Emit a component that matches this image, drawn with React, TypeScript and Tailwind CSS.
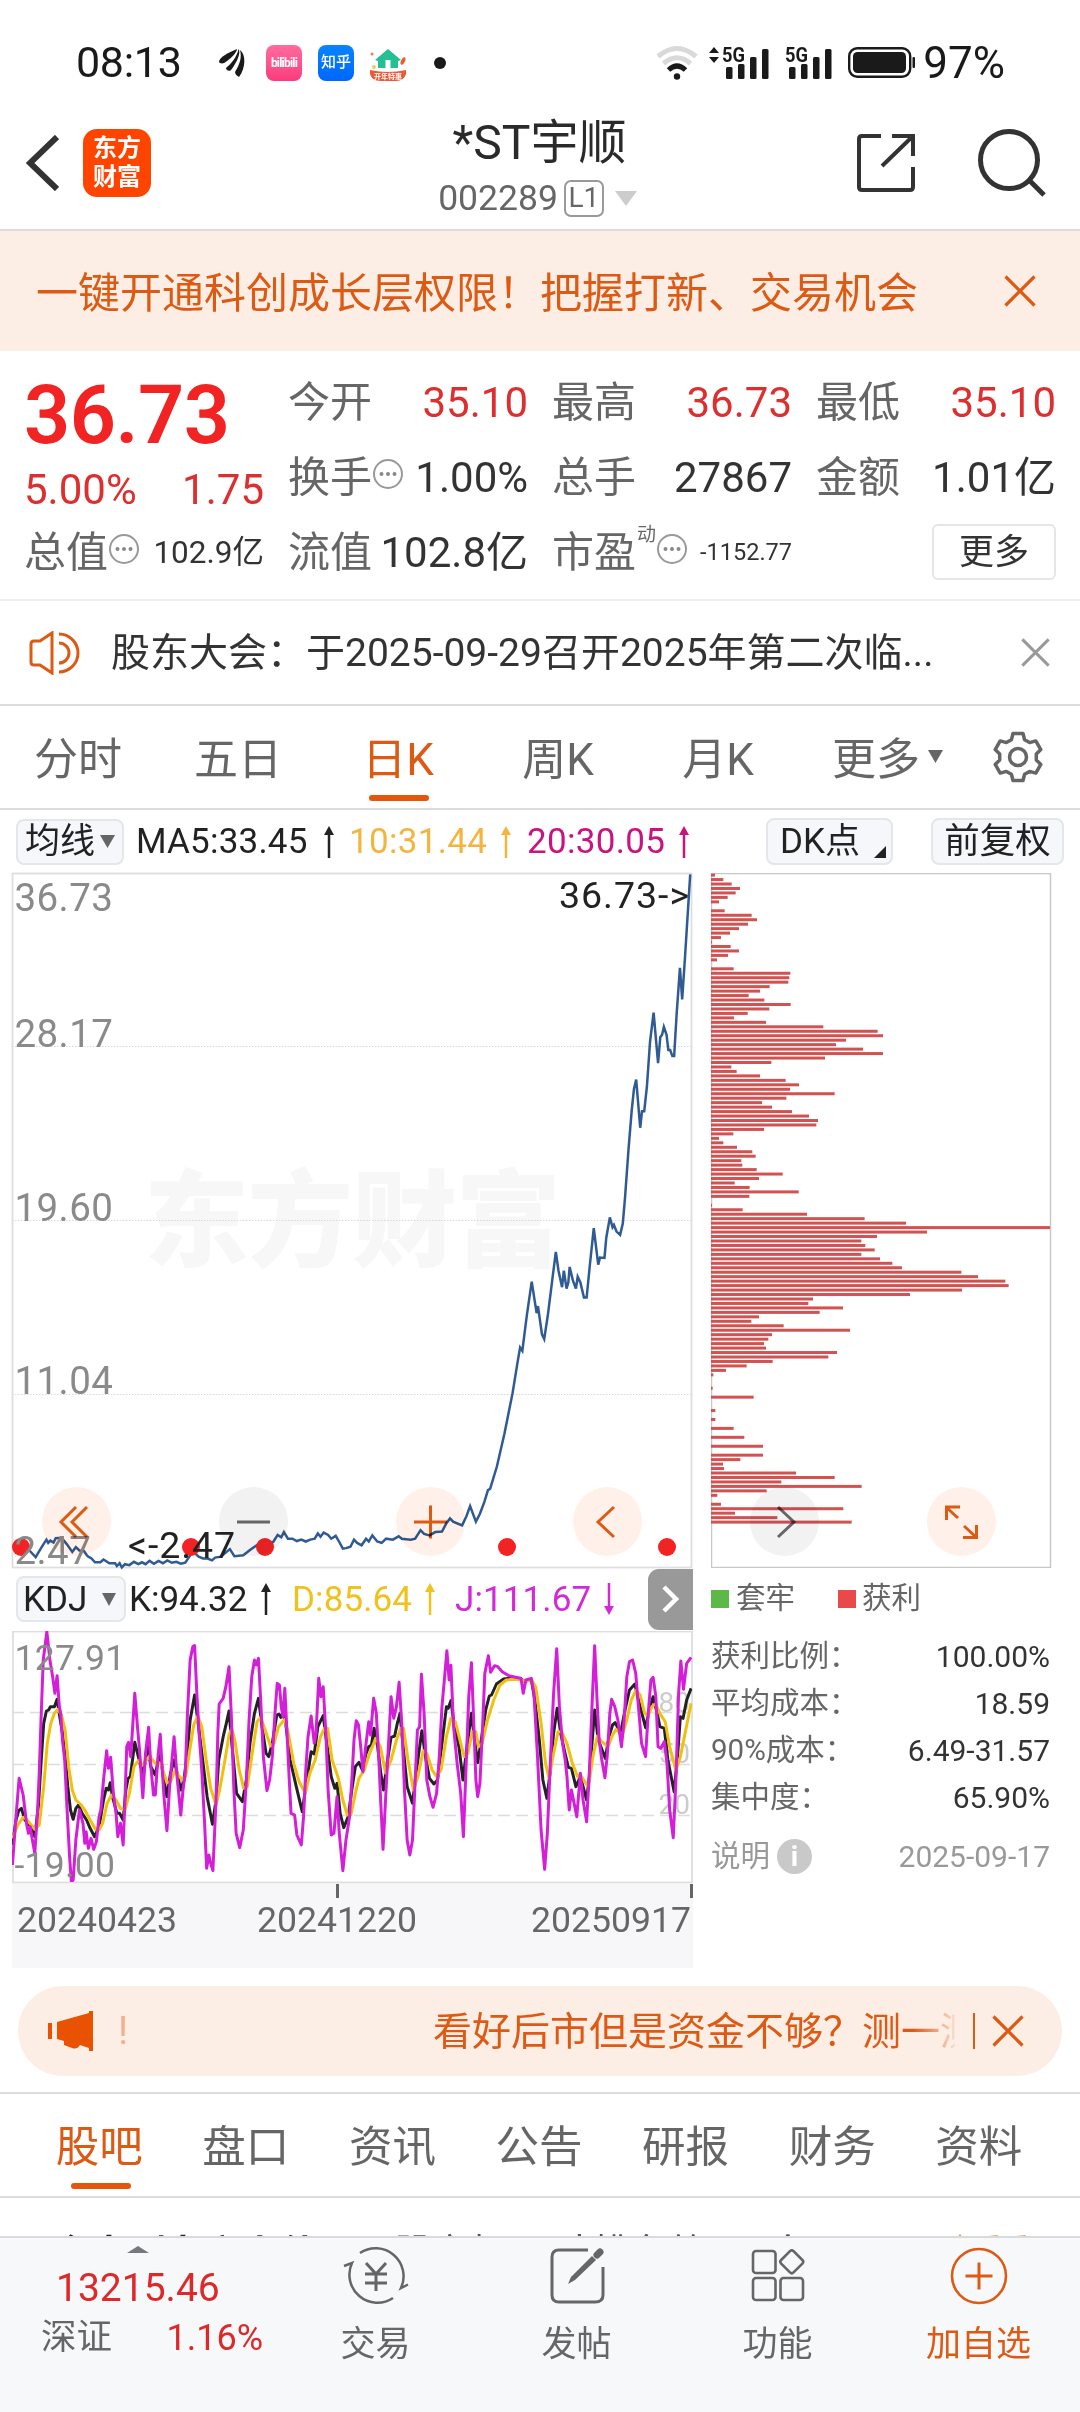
import { useState } from "react";

const stats = [
  { label: "今开", value: "35.10", red: true },
  { label: "最高", value: "36.73", red: true },
  { label: "最低", value: "35.10", red: true },
  { label: "换手", value: "1.00%", tip: true },
  { label: "总手", value: "27867" },
  { label: "金额", value: "1.01亿" },
];

const periods = ["分时", "五日", "日K", "周K", "月K"];
const sections = ["股吧", "盘口", "资讯", "公告", "研报", "财务", "资料"];

const chips = [
  { label: "获利比例：", value: "100.00%" },
  { label: "平均成本：", value: "18.59" },
  { label: "90%成本：", value: "6.49-31.57" },
  { label: "集中度：", value: "65.90%" },
];

// one entry per price level, top of the range first, 1017 = full width
const chipBars = [
  12, 37, 62, 87, 74, 50, 24, 0, 41, 122, 138, 111, 84, 57, 30, 3, 59, 84, 51, 18, 0, 68, 238, 235, 232, 176, 147, 113,
  160, 239, 175, 110, 69, 165, 337, 500, 516, 405, 375, 456, 516, 342, 181, 61, 77, 147, 224, 264, 237, 371, 226, 153,
  183, 243, 294, 321, 316, 159, 67, 24, 37, 78, 124, 134, 91, 94, 137, 215, 144, 71, 116, 263, 115, 0, 3, 95, 288, 461,
  585, 1017, 648, 498, 451, 463, 491, 451, 507, 544, 573, 751, 801, 883, 893, 753, 597, 306, 292, 396, 326, 144, 121,
  218, 417, 183, 172, 159, 165, 378, 352, 185, 107, 45, 7, 0, 0, 5, 0, 128, 0, 0, 13, 0, 13, 0, 68, 0, 100, 0, 156, 0,
  156, 88, 36, 39, 255, 371, 211, 452, 167, 19, 0, 30, 397, 72, 199, 422,
];

const priceLine =
  "65,1462 80,1477 92,1458 104,1440 108,1447 113,1442 120,1446 125,1437 138,1436 150,1450 162,1466 170,1456 178,1463 188,1464 196,1475 205,1480 213,1488 225,1488 232,1482 245,1490 258,1490 262,1496 268,1490 273,1499 280,1492 290,1494 300,1487 310,1492 318,1488 326,1492 335,1485 345,1491 355,1485 365,1490 375,1484 385,1489 395,1487 405,1491 415,1489 425,1475 432,1465 445,1476 455,1480 465,1480 475,1484 482,1478 495,1476 505,1468 515,1460 525,1475 545,1473 560,1462 575,1452 585,1448 600,1450 612,1445 622,1430 630,1435 636,1424 645,1438 655,1438 665,1443 675,1440 685,1444 695,1440 705,1438 712,1427 718,1434 725,1425 735,1430 742,1438 752,1432 760,1445 768,1459 775,1458 785,1455 793,1440 800,1447 810,1452 820,1438 826,1444 834,1431 845,1444 855,1447 865,1438 880,1440 893,1433 900,1438 920,1440 930,1438 942,1420 950,1428 962,1431 975,1424 990,1423 1000,1405 1008,1395 1015,1402 1035,1410 1045,1390 1053,1369 1066,1402 1075,1385 1085,1360 1093,1335 1098,1332 1113,1285 1130,1215 1148,1130 1160,1060 1165,1033 1170,1040 1180,965 1191,893 1202,960 1205,945 1214,1005 1219,1015 1227,965 1237,890 1245,830 1251,870 1259,905 1263,870 1269,908 1273,895 1276,862 1283,890 1290,908 1294,883 1300,895 1308,927 1314,927 1321,860 1330,780 1340,857 1344,842 1354,843 1358,800 1366,757 1372,778 1375,773 1381,787 1389,794 1395,770 1400,715 1408,610 1415,530 1420,485 1425,465 1434,567 1438,532 1443,532 1449,480 1456,385 1464,323 1474,430 1479,375 1483,370 1487,353 1493,370 1497,402 1501,402 1506,415 1510,415 1516,320 1523,228 1528,295 1534,210 1546,30";

const jLine =
  "28,1155 36,1010 43,895 52,945 60,1035 64,1060 68,1040 72,1075 78,1120 84,1000 88,880 92,720 97,540 105,455 112,540 118,590 123,640 128,587 133,680 136,700 140,780 145,840 150,980 156,1130 160,1206 164,1200 170,1080 178,990 186,1030 190,1090 193,1055 198,1105 204,1075 210,1108 216,1085 222,1010 226,990 232,900 239,812 243,865 248,832 254,940 260,1000 264,1070 270,1030 276,1095 280,960 284,800 288,787 293,830 302,640 308,740 313,815 320,953 326,820 333,742 338,860 344,945 348,945 354,830 359,763 364,880 368,960 374,1052 380,920 390,770 396,880 405,1005 410,930 415,880 420,700 426,540 432,500 436,497 441,640 446,760 452,870 458,1020 463,1165 468,1125 472,1150 477,1172 484,960 488,760 491,672 500,655 506,620 513,560 518,700 524,930 529,1060 537,1103 545,1050 552,900 558,720 564,590 570,540 574,555 579,535 584,660 590,830 598,932 604,900 610,830 616,700 621,610 626,615 630,680 634,710 638,625 643,760 648,900 652,1000 660,1005 665,1065 675,1095 680,1010 685,870 690,770 697,708 704,790 708,760 714,595 719,650 724,620 730,760 735,930 742,1065 748,1060 755,950 760,1060 768,1172 775,1080 783,1010 789,880 793,780 798,722 803,735 808,800 813,875 820,790 826,725 830,765 837,655 843,700 849,850 853,970 858,1108 864,950 870,800 876,650 882,715 888,680 894,607 900,730 906,930 912,1080 918,1125 924,1080 930,900 935,750 940,740 944,583 950,700 956,900 963,950 970,982 978,940 984,830 990,680 996,590 1001,512 1006,600 1010,556 1016,740 1024,850 1032,940 1038,1070 1044,860 1050,650 1056,548 1061,720 1066,900 1070,950 1075,910 1081,740 1086,580 1094,527 1099,577 1104,565 1108,557 1115,560 1125,575 1140,587 1160,593 1167,595 1172,640 1178,600 1190,595 1196,640 1204,830 1212,1050 1220,1168 1226,1060 1233,840 1240,640 1247,506 1253,680 1260,790 1266,840 1270,890 1275,990 1280,930 1286,970 1292,1010 1300,880 1306,960 1314,1025 1320,880 1326,680 1332,497 1337,650 1342,780 1348,840 1355,893 1360,830 1366,700 1370,658 1377,680 1384,720 1392,800 1398,720 1404,590 1410,545 1417,540 1424,580 1430,680 1437,790 1446,830 1452,700 1458,600 1463,592 1469,650 1474,800 1480,805 1488,785 1494,850 1500,990 1508,1073 1514,900 1520,640 1525,543 1531,628 1538,550 1548,532";

const kLine =
  "28,1095 36,1020 42,992 48,985 56,1020 66,1035 73,1045 78,1070 86,980 92,850 98,730 104,693 109,690 113,680 122,680 128,658 134,710 140,760 146,830 152,920 158,990 164,1018 170,985 176,975 184,1000 194,1020 202,1045 212,1070 222,1040 232,960 238,925 243,930 247,908 252,950 262,1000 268,1000 276,1020 282,930 287,895 292,890 302,787 310,830 320,885 326,840 331,800 338,860 348,885 358,815 366,890 374,950 382,880 390,840 397,880 405,930 412,900 418,840 426,720 436,645 444,730 454,840 464,950 476,1033 484,960 490,840 500,770 507,730 513,693 520,800 530,940 543,965 552,900 560,790 570,700 579,655 587,740 596,820 602,830 610,790 620,705 625,702 629,712 634,700 640,730 650,840 662,910 677,995 685,920 697,815 704,822 712,740 724,707 732,790 742,890 750,925 755,910 762,1000 770,1043 780,1010 788,930 796,860 804,847 812,870 820,820 826,800 832,795 838,745 846,800 853,880 859,930 867,850 876,772 884,768 890,730 896,700 903,800 912,920 924,970 932,880 938,820 945,752 953,830 962,895 972,912 980,900 990,790 1000,680 1004,685 1010,662 1018,740 1028,800 1037,900 1046,800 1056,700 1063,780 1070,848 1078,780 1088,690 1096,648 1101,645 1112,612 1128,597 1150,594 1168,598 1176,605 1190,598 1198,660 1208,780 1216,900 1225,955 1232,880 1240,760 1248,685 1256,760 1264,810 1273,862 1280,865 1290,920 1300,890 1314,960 1320,890 1326,790 1332,690 1340,780 1356,835 1364,770 1372,735 1378,728 1390,760 1400,690 1410,630 1422,612 1430,660 1446,743 1456,680 1463,650 1472,700 1478,740 1488,745 1496,840 1510,935 1518,820 1524,710 1530,715 1538,660 1548,625";

const dLine =
  "28,1075 40,1035 52,1012 60,1018 78,1048 88,1035 98,920 106,790 114,730 122,700 130,688 138,705 146,750 154,860 162,930 170,960 180,972 190,990 202,1020 214,1048 222,1050 230,1030 240,970 250,945 260,960 270,985 280,990 290,940 300,860 310,842 320,855 335,828 348,850 360,850 374,908 382,905 392,872 408,900 416,890 424,820 434,735 443,708 452,740 462,840 472,925 484,975 492,930 504,840 513,765 519,745 526,780 536,870 546,925 554,920 566,810 576,725 584,712 594,750 606,798 614,790 624,740 638,718 646,760 658,850 670,905 684,940 694,880 706,840 718,770 728,742 734,745 744,840 758,895 768,960 778,1005 786,1005 796,940 804,895 816,870 828,820 842,775 852,800 864,880 876,840 888,780 898,745 904,745 914,840 926,930 936,890 948,812 956,820 968,870 978,890 988,870 1000,770 1010,715 1020,725 1032,790 1040,830 1048,820 1058,755 1066,755 1072,800 1080,790 1092,720 1106,660 1120,615 1134,600 1150,598 1168,600 1178,605 1190,598 1200,620 1212,730 1222,850 1230,895 1240,820 1250,755 1258,755 1270,790 1282,850 1294,890 1300,885 1310,905 1318,922 1328,830 1338,768 1348,785 1362,800 1372,765 1380,748 1394,765 1404,720 1414,660 1424,632 1434,645 1444,700 1452,708 1460,680 1468,672 1480,705 1490,725 1500,800 1514,872 1524,830 1536,750 1548,670";

// six-tooth gear outline around 0,0
const gear = [0, 1, 2, 3, 4, 5]
  .flatMap((i) =>
    [[-21, 18.5], [-12, 24], [12, 24], [21, 18.5]].map(([a, r]) => {
      const t = ((i * 60 - 90 + a) * Math.PI) / 180;
      return `${(r * Math.cos(t)).toFixed(1)},${(r * Math.sin(t)).toFixed(1)}`;
    })
  )
  .join(" ");

function Arrow({ down }: { down?: boolean }) {
  return (
    <svg width="12" height="32" viewBox="0 0 12 32" className={down ? "rotate-180" : ""}>
      <path d="M6 4V32" stroke="currentColor" strokeWidth="2.5" />
      <path d="M6 0L11 9H1Z" fill="currentColor" />
    </svg>
  );
}

function Caret({ w = 15, h = 13, className = "" }: { w?: number; h?: number; className?: string }) {
  return (
    <svg width={w} height={h} viewBox="0 0 10 10" preserveAspectRatio="none" className={className}>
      <path d="M0 0H10L5 10Z" fill="currentColor" />
    </svg>
  );
}

function Tip() {
  return (
    <svg width="32" height="32" viewBox="0 0 32 32" className="-mt-2 shrink-0">
      <circle cx="16" cy="16" r="14" fill="none" stroke="#999" strokeWidth="2" />
      <g fill="#888">
        <circle cx="9.5" cy="16" r="2" />
        <circle cx="16" cy="16" r="2" />
        <circle cx="22.5" cy="16" r="2" />
      </g>
    </svg>
  );
}

function Close({ size, className }: { size: number; className?: string }) {
  return (
    <svg width={size} height={size} viewBox="0 0 32 32" className={className}>
      <path d="M1.5 1.5L30.5 30.5M30.5 1.5L1.5 30.5" stroke="currentColor" strokeWidth="3.2" fill="none" />
    </svg>
  );
}

function Signal() {
  return (
    <svg width="46" height="34" viewBox="0 0 46 34" className="overflow-visible text-[#1a1a1a]">
      <text x="-1" y="16" fontSize="20" fontWeight="700" fill="currentColor" textLength="23" lengthAdjust="spacingAndGlyphs">5G</text>
      <g fill="currentColor">
        <rect x="3" y="21" width="6.5" height="12" rx="1.5" />
        <rect x="15" y="18" width="6.5" height="15" rx="1.5" />
        <rect x="27" y="11" width="6.5" height="22" rx="1.5" />
        <rect x="39" y="3" width="6.5" height="30" rx="1.5" />
      </g>
    </svg>
  );
}

function StatusBar() {
  return (
    <div className="flex h-[125px] items-center pl-[76px] pr-[75px] text-[#1a1a1a]">
      <span className="w-[143px] text-[43px] leading-none tracking-[-0.3px]">08:13</span>
      <svg width="27" height="30" viewBox="0 0 27 30" fill="currentColor">
        <path d="M0 14C0 9 9 5 18 1C18 5 9 13 5 15C3 16 0 15 0 14Z" />
        <path d="M7 20C12 16 18 9 19.500 1C22 4 19 13 12 22C10 24 7 22 7 20Z" />
        <path d="M16 24C21 16 23 9 21 2C27 6 27 20 20 29C18 28 16 26 16 24Z" />
      </svg>
      <div className="ml-5 flex h-9 w-9 items-center justify-center rounded-lg bg-linear-to-b from-[#ff6a9d] to-[#fb3a7c] text-[12px] font-bold tracking-[-0.8px] text-white">
        bilibili
      </div>
      <div className="ml-4 flex h-9 w-9 items-center justify-center rounded-lg bg-linear-to-b from-[#0a84ff] to-[#0066ff] text-[15px] font-medium text-white">
        知乎
      </div>
      <svg width="36" height="36" viewBox="0 0 36 36" className="ml-4">
        <path d="M18 4L5 15L8 16V23H28V16L31 15Z" fill="#25bf95" />
        <rect x="15.500" y="15" width="5" height="8" fill="#fff" />
        <path d="M0 25Q18 29 36 25V29Q34 36 26 36H10Q2 36 0 29Z" fill="#ea5a34" />
        <ellipse cx="33" cy="16" rx="2" ry="4" fill="#e8602c" transform="rotate(25 33 16)" />
        <circle cx="2" cy="9" r="1.500" fill="#f07a4a" />
        <circle cx="4" cy="22" r="2" fill="#f6c667" />
        <text x="18" y="34" fontSize="7" fontWeight="700" fill="#fff" textAnchor="middle">开年特惠</text>
      </svg>
      <span className="ml-7 h-3 w-3 rounded-full bg-[#1a1a1a]" />

      <svg width="42" height="36" viewBox="0 0 42 36" fill="none" strokeWidth="5" className="ml-auto">
        <path d="M2 11.500Q21 -4.500 40 11.500" stroke="#d9d9d9" />
        <path d="M7.500 18.500Q21 7 34.500 18.500" stroke="#d9d9d9" />
        <path d="M12.500 25Q21 17 29.500 25" stroke="#1a1a1a" />
        <circle cx="21" cy="31.500" r="3.200" fill="#1a1a1a" />
      </svg>
      <svg width="12" height="16" viewBox="0 0 12 16" className="-mt-4 ml-[10px]" fill="currentColor">
        <path d="M6 0L11 6H1ZM6 16L11 10H1Z" />
      </svg>
      <div className="ml-[3px]"><Signal /></div>
      <div className="ml-[17px]"><Signal /></div>
      <svg width="68" height="31" viewBox="0 0 68 31" className="ml-4">
        <rect x="1.200" y="1.200" width="61" height="28.600" rx="8" fill="none" stroke="#1a1a1a" strokeWidth="2.400" />
        <rect x="5" y="5" width="53" height="21" rx="4.500" fill="#1a1a1a" />
        <rect x="64.500" y="10" width="2.500" height="11" rx="1" fill="#1a1a1a" />
      </svg>
      <span className="ml-[7px] text-[44px] leading-none">97%</span>
    </div>
  );
}

function Header() {
  return (
    <header className="flex h-[106px] items-start justify-between border-b-2 border-[#dcdcdc] pl-[26px] pr-[34px] text-[#333]">
      <div className="flex w-[220px] items-center gap-6 pt-1">
        <svg width="33" height="56" viewBox="0 0 33 56" fill="none" stroke="currentColor" strokeWidth="6">
          <path d="M31 2L4 28L31 54" />
        </svg>
        <div className="flex h-[68px] w-[68px] flex-col items-center justify-center rounded-[14px] bg-[#ff4400] text-2xl leading-[29px] font-bold text-white">
          <span>东方</span>
          <span>财富</span>
        </div>
      </div>
      <div className="flex flex-col items-center">
        <h1 className="mt-[-6px] ml-[7px] text-[48px] leading-[48px] text-[#2a2a2a]">*ST宇顺</h1>
        <div className="mt-[11px] ml-[3px] flex items-center text-[35.500px] leading-[40px] text-[#666]">
          002289
          <span className="ml-[6px] flex h-[37px] w-10 items-center justify-center rounded-[7px] border-2 border-[#999] text-[28px] leading-none">L1</span>
          <Caret w={22} h={15} className="ml-[11px] text-[#ccc]" />
        </div>
      </div>
      <div className="flex w-[220px] justify-end gap-[63px] pt-1">
        <svg width="58" height="58" viewBox="0 0 58 58" fill="none" stroke="currentColor" strokeWidth="4" className="mt-[5px]">
          <path d="M24 2H5Q2 2 2 5V53Q2 56 5 56H53Q56 56 56 53V33M35 2H56V22M55 3L25 32" />
        </svg>
        <svg width="68" height="68" viewBox="0 0 68 68" fill="none" stroke="currentColor" strokeWidth="5">
          <circle cx="31" cy="31" r="28.500" />
          <path d="M52 52L66 66" />
        </svg>
      </div>
    </header>
  );
}

function Quote() {
  return (
    <section className="flex h-[250px] gap-[24px] border-b-2 border-[#efefef] px-[24px] pt-[14px] text-[42px] leading-[75px] text-[#333]">
      <div className="w-[240px] shrink-0">
        <div className="h-[88px] pt-[7px] text-[81px] leading-[88px] font-semibold tracking-[-0.5px] text-[#f12323]">36.73</div>
        <div className="flex h-[62px] justify-between pt-[6px] leading-[62px] text-[#dc3030]">
          <span className="text-[42px]">5.00%</span>
          <span className="text-[42px]">1.75</span>
        </div>
        <div className="flex h-[75px] items-center whitespace-nowrap">
          <span className="text-[#666]">总值</span>
          <Tip />
          <span className="ml-auto text-[31.500px]">102.9亿</span>
        </div>
      </div>
      <div className="grid flex-1 grid-cols-3 gap-x-[24px] whitespace-nowrap [grid-auto-rows:75px]">
        {stats.map((s) => (
          <div key={s.label} className="flex items-center">
            <span className="text-[#666]">{s.label}</span>
            {s.tip && <Tip />}
            <span className={"ml-auto " + (s.red ? "text-[#dc3030]" : "")}>{s.value}</span>
          </div>
        ))}
        <div className="flex items-center justify-between">
          <span className="text-[#666]">流值</span>
          <span>102.8亿</span>
        </div>
        <div className="flex items-center">
          <span className="text-[#666]">市盈</span>
          <span className="-mt-9 ml-px text-[19px] leading-none text-[#666]">动</span>
          <Tip />
          <span className="ml-auto text-[23.500px]">-1152.77</span>
        </div>
        <button className="mt-[9px] ml-auto flex h-14 w-[124px] items-center justify-center rounded-md border-2 border-[#e6e6e6] text-[35px] leading-none">更多</button>
      </div>
    </section>
  );
}

function PriceChart() {
  return (
    <svg width="681" height="694" viewBox="12 873 681 694" className="block overflow-visible">
      <g fill="#f7f7f7" fontWeight="900" fontSize="105">
        <text x="144" y="1258" textLength="417">东方财富</text>
      </g>
      <rect x="12.500" y="873.500" width="679" height="694" fill="none" stroke="#dedede" strokeWidth="1.800" />
      <g stroke="#d8d8d8" strokeDasharray="1.500 1.500">
        <path d="M12 1046.500H692M12 1220.500H692M12 1394.500H692" />
      </g>
      <svg x="12" y="873" width="680" height="694" viewBox="27 27 1523 1471" preserveAspectRatio="none" overflow="visible">
        <polyline points={priceLine} fill="none" stroke="#2f5a93" strokeWidth="2.500" vectorEffect="non-scaling-stroke" />
      </svg>
      <g fill="#f12323">
        {[21, 191, 265, 507, 667].map((x) => (
          <circle key={x} cx={x} cy="1547" r="9" />
        ))}
      </g>
      <g fill="#8a8a8a" fontSize="38.500" letterSpacing="0.4">
        <text x="14.500" y="911">36.73</text>
        <text x="14.500" y="1047">28.17</text>
        <text x="14.500" y="1221">19.60</text>
        <text x="14.500" y="1394">11.04</text>
        <text x="14.500" y="1564">2.47</text>
      </g>
      <g fill="#222" fontSize="37.500">
        <text x="559" y="908" textLength="130">36.73-&gt;</text>
        <text x="128" y="1558" textLength="107">&lt;-2.47</text>
      </g>
    </svg>
  );
}

function KdjChart() {
  return (
    <svg width="681" height="253" viewBox="12 1631 681 253" className="block">
      <rect x="13" y="1631.500" width="679" height="251" fill="none" stroke="#dedede" strokeWidth="1.800" />
      <g stroke="#dcdcdc" strokeWidth="1.500" strokeDasharray="12 6">
        <path d="M12 1712.500H692M12 1764.500H692M12 1815.500H692" />
      </g>
      <g fill="#ccc" fontSize="28" textAnchor="end">
        <text x="690" y="1712">80</text>
        <text x="690" y="1763">50</text>
        <text x="690" y="1814">20</text>
      </g>
      <svg x="12" y="1631" width="680" height="251" viewBox="27 453 1523 753" preserveAspectRatio="none">
        <g fill="none" strokeWidth="3" strokeLinejoin="round">
          <polyline points={kLine} stroke="#222" vectorEffect="non-scaling-stroke" />
          <polyline points={dLine} stroke="#f0c010" vectorEffect="non-scaling-stroke" />
          <polyline points={jLine} stroke="#d41fd8" vectorEffect="non-scaling-stroke" />
        </g>
      </svg>
      <g fill="#8a8a8a" fontSize="35.500" letterSpacing="0.3">
        <text x="14.500" y="1670">127.91</text>
        <text x="14.500" y="1877">-19.00</text>
      </g>
    </svg>
  );
}

function ChipChart() {
  const step = 647 / (chipBars.length - 1);
  return (
    <svg width="341" height="695" viewBox="0 0 341 695" className="block">
      <rect x="0.500" y="0.500" width="339" height="694" fill="none" stroke="#c8c8c8" strokeWidth="1.500" />
      <g fill="#d25252">
        {chipBars.map((w, i) => (
          <rect key={i} x="0" y={0.6 + i * step} width={w / 3} height="3" />
        ))}
      </g>
    </svg>
  );
}

const controls = [
  { key: "first", d: "M34 20L19 35L34 50M45 20L30 35L45 50" },
  { key: "minus", d: "M18 35H51", gray: true },
  { key: "plus", d: "M18 35H51M34.500 18.500V51.500" },
  { key: "prev", d: "M41 20L25 35L41 50" },
  { key: "next", d: "M28 20L44 35L28 50", gray: true },
  { key: "expand", d: "M19.500 33V20H33M20 21L31 31M49.500 38V50.500H36M49 50L37 39" },
];

function Charts() {
  return (
    <section className="relative flex pl-3">
      <div className="w-[681px]">
        <PriceChart />
        <div className="flex h-16 items-center pl-1 text-[35px] leading-none text-[#222]">
          <div className="flex h-[46px] w-[110px] items-center justify-between rounded-lg border-2 border-[#e3e6ea] bg-[#f6f7fa] pr-2 pl-[5px]">
            KDJ
            <Caret w={14} className="text-[#666]" />
          </div>
          <span className="ml-[3px] w-[131px]">K:94.32</span>
          <Arrow />
          <span className="ml-[20px] w-[132px] tracking-[0.1px] text-[#efc21c]">D:85.64</span>
          <span className="text-[#efc21c]"><Arrow /></span>
          <span className="ml-[19px] w-[148px] tracking-[0.1px] text-[#d22ad6]">J:111.67</span>
          <span className="text-[#d22ad6]"><Arrow down /></span>
          <span className="ml-auto flex h-[61px] w-[45px] items-center justify-center rounded-l-[11px] bg-[#999]">
            <svg width="18" height="28" viewBox="0 0 18 28" fill="none" stroke="#fff" strokeWidth="4.500">
              <path d="M2 2L14 14L2 26" />
            </svg>
          </span>
        </div>
        <KdjChart />
        <div className="relative flex h-[84px] bg-[#f7f7fa] pt-[16px] pr-[2px] pl-[5px] text-[35.600px] leading-[40px] text-[#666]">
          <span className="w-[240px]">20240423</span>
          <span>20241220</span>
          <span className="ml-auto">20250917</span>
          <i className="absolute top-0 left-[324px] h-[14px] w-[3px] bg-[#666]" />
          <i className="absolute top-0 right-0 h-[14px] w-[3px] bg-[#666]" />
        </div>
      </div>

      <div className="ml-[18px] w-[341px] text-[30px] leading-none text-[#333]">
        <ChipChart />
        <div className="flex h-[60px] items-center pt-[2px] text-[29.500px] text-[#666]">
          <i className="mr-[7px] h-[18px] w-[18px] bg-[#5cb947]" />
          套牢
          <i className="mr-[6px] ml-[43px] h-[18px] w-[18px] bg-[#e84a4a]" />
          获利
        </div>
        <div className="mt-[5px]">
          {chips.map((c) => (
            <div key={c.label} className="flex h-[47px] items-center justify-between pr-[2px]">
              <span className="text-[29.500px] text-[#666]">{c.label}</span>
              <span>{c.value}</span>
            </div>
          ))}
        </div>
        <div className="mt-3 flex h-[47px] items-center pr-[2px] text-[#999]">
          <span className="text-[29.500px]">说明</span>
          <span className="ml-[7px] flex h-[35px] w-[35px] items-center justify-center rounded-full bg-[#c9c9c9] text-[28px] font-bold text-white">i</span>
          <span className="ml-auto">2025-09-17</span>
        </div>
      </div>

      {/* chart controls float over both charts */}
      <div className="absolute top-[614px] left-[42px] flex gap-[108px]">
        {controls.map((c) => (
          <button
            key={c.key}
            className={"h-[69px] w-[69px] rounded-full mix-blend-multiply " + (c.gray ? "bg-[#f2f2f2] text-[#666]" : "bg-[#fff1e9] text-[#dd5a14]")}
          >
            <svg width="69" height="69" viewBox="0 0 69 69" fill="none" stroke="currentColor" strokeWidth="3">
              <path d={c.d} />
            </svg>
          </button>
        ))}
      </div>
    </section>
  );
}

function BottomBar() {
  return (
    <footer className="flex h-[176px] shrink-0 border-t-2 border-[#d9dade] bg-[#f7f8fa] text-[35px] leading-none text-[#666]">
      <div className="w-[275px] pt-2">
        <svg width="22" height="7" viewBox="0 0 22 7" className="ml-[127px]"><path d="M11 0L22 7H0Z" fill="#77777c" /></svg>
        <div className="mt-4 pl-[56px] text-[39px] text-[#dc2a2a]">13215.46</div>
        <div className="mt-3 flex items-center justify-between pr-[12px] pl-[41px] text-[35.500px]">
          深证
          <span className="text-[36px] text-[#dc2a2a]">1.16%</span>
        </div>
      </div>
      <div className="flex w-[201px] flex-col items-center pt-[8px]">
        <svg width="66" height="60" viewBox="0 0 66 60" fill="none" stroke="currentColor" strokeWidth="2.500">
          <path d="M17 7A28 28 0 0 1 58 42L65 38.500" />
          <path d="M50 52A28 28 0 0 1 9 17L1 20" />
          <path d="M23 17L33 28L43 17M22 28H44M22 37H44M33 28V45" strokeWidth="3" />
        </svg>
        <span className="mt-[21px]">交易</span>
      </div>
      <div className="flex w-[201px] flex-col items-center pt-[8px]">
        <svg width="56" height="60" viewBox="0 0 56 60" fill="none" stroke="currentColor" strokeWidth="3">
          <path d="M39 4H10Q3 4 3 11V49Q3 56 10 56H46Q54 56 54 49V21" />
          <path d="M19 38L22 31L43 10L47 14L26 34Z" fill="currentColor" stroke="none" />
          <path d="M48 9L51 6" strokeWidth="7" strokeLinecap="round" />
        </svg>
        <span className="mt-[21px]">发帖</span>
      </div>
      <div className="flex w-[201px] flex-col items-center pt-[8px]">
        <svg width="54" height="60" viewBox="0 0 54 60" fill="none" stroke="currentColor" strokeWidth="2.600">
          <rect x="2" y="5" width="22.500" height="22" rx="3" />
          <rect x="2" y="32" width="22.500" height="22" rx="3" />
          <rect x="29.500" y="32" width="22.500" height="22" rx="3" />
          <rect x="32" y="7" width="17.500" height="17.500" rx="2.500" transform="rotate(45 40.700 15.800)" />
        </svg>
        <span className="mt-[21px]">功能</span>
      </div>
      <div className="flex w-[201px] flex-col items-center pt-[8px] text-[#dd5a14]">
        <svg width="60" height="60" viewBox="0 0 60 60" fill="none" stroke="currentColor" strokeWidth="2.600">
          <circle cx="30" cy="30" r="27" />
          <path d="M16.500 30H43.500M30 16.500V43.500" strokeWidth="3" />
        </svg>
        <span className="mt-[21px]">加自选</span>
      </div>
    </footer>
  );
}

export default function App() {
  const [period, setPeriod] = useState("日K");
  const [section, setSection] = useState("股吧");

  return (
    <div className="flex h-[2412px] w-[1080px] flex-col overflow-hidden bg-white [font-family:Roboto,'Noto_Sans_CJK_SC',sans-serif]">
      <StatusBar />
      <Header />

      <div className="flex h-[120px] items-center justify-between bg-[#fceee5] pr-[44px] pl-[36px] text-[42px] leading-none text-[#dd5a14]">
        <span className="pt-[5px] whitespace-nowrap">一键开通科创成长层权限！把握打新、交易机会</span>
        <Close size={32} />
      </div>

      <Quote />

      {/* company notice */}
      <div className="flex h-[105px] items-center border-b-2 border-[#dcdcdc] pr-[30px] pl-[29px] text-[39px] leading-none text-[#333]">
        <svg width="52" height="44" viewBox="0 0 52 44" fill="none" stroke="#dd5a14" strokeWidth="3">
          <path d="M23 2V42L11 34H5Q2 34 2 31V13Q2 10 5 10H11Z" />
          <path d="M30 3A18 18 0 0 1 30 41M30 12A10 10 0 0 1 30 32" />
        </svg>
        <span className="ml-[30px] pt-px whitespace-nowrap">股东大会：于2025-09-29召开2025年第二次临...</span>
        <Close size={29} className="ml-auto text-[#999]" />
      </div>

      {/* k-line period */}
      <nav className="flex h-[104px] border-b-2 border-[#dcdcdc] text-[44px] leading-none text-[#666]">
        {periods.map((p) => (
          <button key={p} onClick={() => setPeriod(p)} className={"relative flex w-[160px] items-center justify-center pt-[6px] pr-[4px] " + (p === period ? "text-[#dd5a14]" : "")}>
            {p}
            {p === period && <i className="absolute bottom-[7px] left-[49px] h-[6px] w-[60px] rounded-full bg-[#e4560a]" />}
          </button>
        ))}
        <button className="ml-[32px] flex items-center gap-[8px] pt-[6px]">
          更多
          <Caret className="-mt-2" />
        </button>
        <svg width="52" height="52" viewBox="-26 -26 52 52" fill="none" stroke="currentColor" strokeWidth="3.500" strokeLinejoin="round" className="my-auto ml-auto mr-[36px]">
          <polygon points={gear} />
          <circle r="8.500" />
        </svg>
      </nav>

      {/* moving averages */}
      <div className="flex h-[63px] items-center pr-4 pl-4 text-[35px] leading-none whitespace-nowrap text-[#222]">
        <div className="flex h-[46px] w-[108px] items-center justify-between rounded-lg border-2 border-[#e3e6ea] bg-[#f6f7fa] pr-[7px] pl-[7px]">
          均线
          <Caret className="text-[#666]" />
        </div>
        <span className="ml-3 w-[187px] tracking-[0.2px]">MA5:33.45</span>
        <Arrow />
        <span className="ml-[14px] w-[151px] tracking-[0.3px] text-[#f2b640]">10:31.44</span>
        <span className="text-[#f2b640]"><Arrow /></span>
        <span className="ml-[15px] w-[151px] tracking-[0.3px] text-[#c8157e]">20:30.05</span>
        <span className="text-[#c8157e]"><Arrow /></span>
        <div className="relative ml-auto flex h-[47px] w-[127px] items-center rounded-lg border-2 border-[#e3e6ea] bg-[#f6f7fa] pl-[12px]">
          DK点
          <svg width="12" height="12" viewBox="0 0 12 12" className="absolute right-[5px] bottom-[5px]"><path d="M12 0V12H0Z" fill="#222" /></svg>
        </div>
        <div className="ml-[38px] flex h-[47px] w-[133px] items-center justify-center rounded-lg border-2 border-[#e3e6ea] bg-[#f6f7fa] text-[35.500px]">前复权</div>
      </div>

      <Charts />

      <div className="mx-[18px] mt-[18px] flex h-[90px] shrink-0 items-center rounded-full bg-[#fceee5] pr-[38px] pl-[30px] text-[39px] leading-none text-[#dd5a14]">
        <svg width="46" height="40" viewBox="0 0 46 40" fill="#e85200">
          <rect x="0" y="12" width="4" height="16" />
          <path d="M9 11L41 2V0H45V40H41V37L32 34Q29 39 24 37L16 34V30L9 28Z" />
        </svg>
        <span className="ml-[6px] w-[28px] text-right opacity-40">!</span>
        <span className="mr-[18px] ml-[305px] flex-1 overflow-hidden pt-px leading-[50px] whitespace-nowrap [mask-image:linear-gradient(to_right,#000_92%,transparent_101%)]">看好后市但是资金不够？测一测</span>
        <i className="h-9 w-[2px] bg-[#dd5a14]" />
        <Close size={32} className="ml-[17px]" />
      </div>

      <nav className="mt-4 flex h-[106px] shrink-0 border-y-2 border-[#dcdcdc] pr-[28px] pl-[26px] text-[43.500px] leading-none text-[#666]">
        {sections.map((s) => (
          <button key={s} onClick={() => setSection(s)} className={"relative flex flex-1 items-center justify-center pt-[6px] " + (s === section ? "text-[#dd5a14]" : "")}>
            {s}
            {s === section && <i className="absolute bottom-[7px] left-[45px] h-[6px] w-[60px] rounded-full bg-[#e4560a]" />}
          </button>
        ))}
      </nav>

      {/* first post, mostly hidden under the bottom bar */}
      <div className="flex h-[38px] shrink-0 overflow-hidden pt-[35px] pr-[50px] pl-[52px] text-[38px] leading-[40px] whitespace-nowrap text-[#555]">
        <b className="pt-px text-[#222]">今大到力六上什</b>
        <span className="ml-[76px]">股市标题 才挑各第<span className="text-[#e8a060]">500</span>名</span>
        <span className="-mt-[3px] ml-auto text-[28px] text-[#e8a060]">去看看</span>
      </div>

      <BottomBar />
    </div>
  );
}
